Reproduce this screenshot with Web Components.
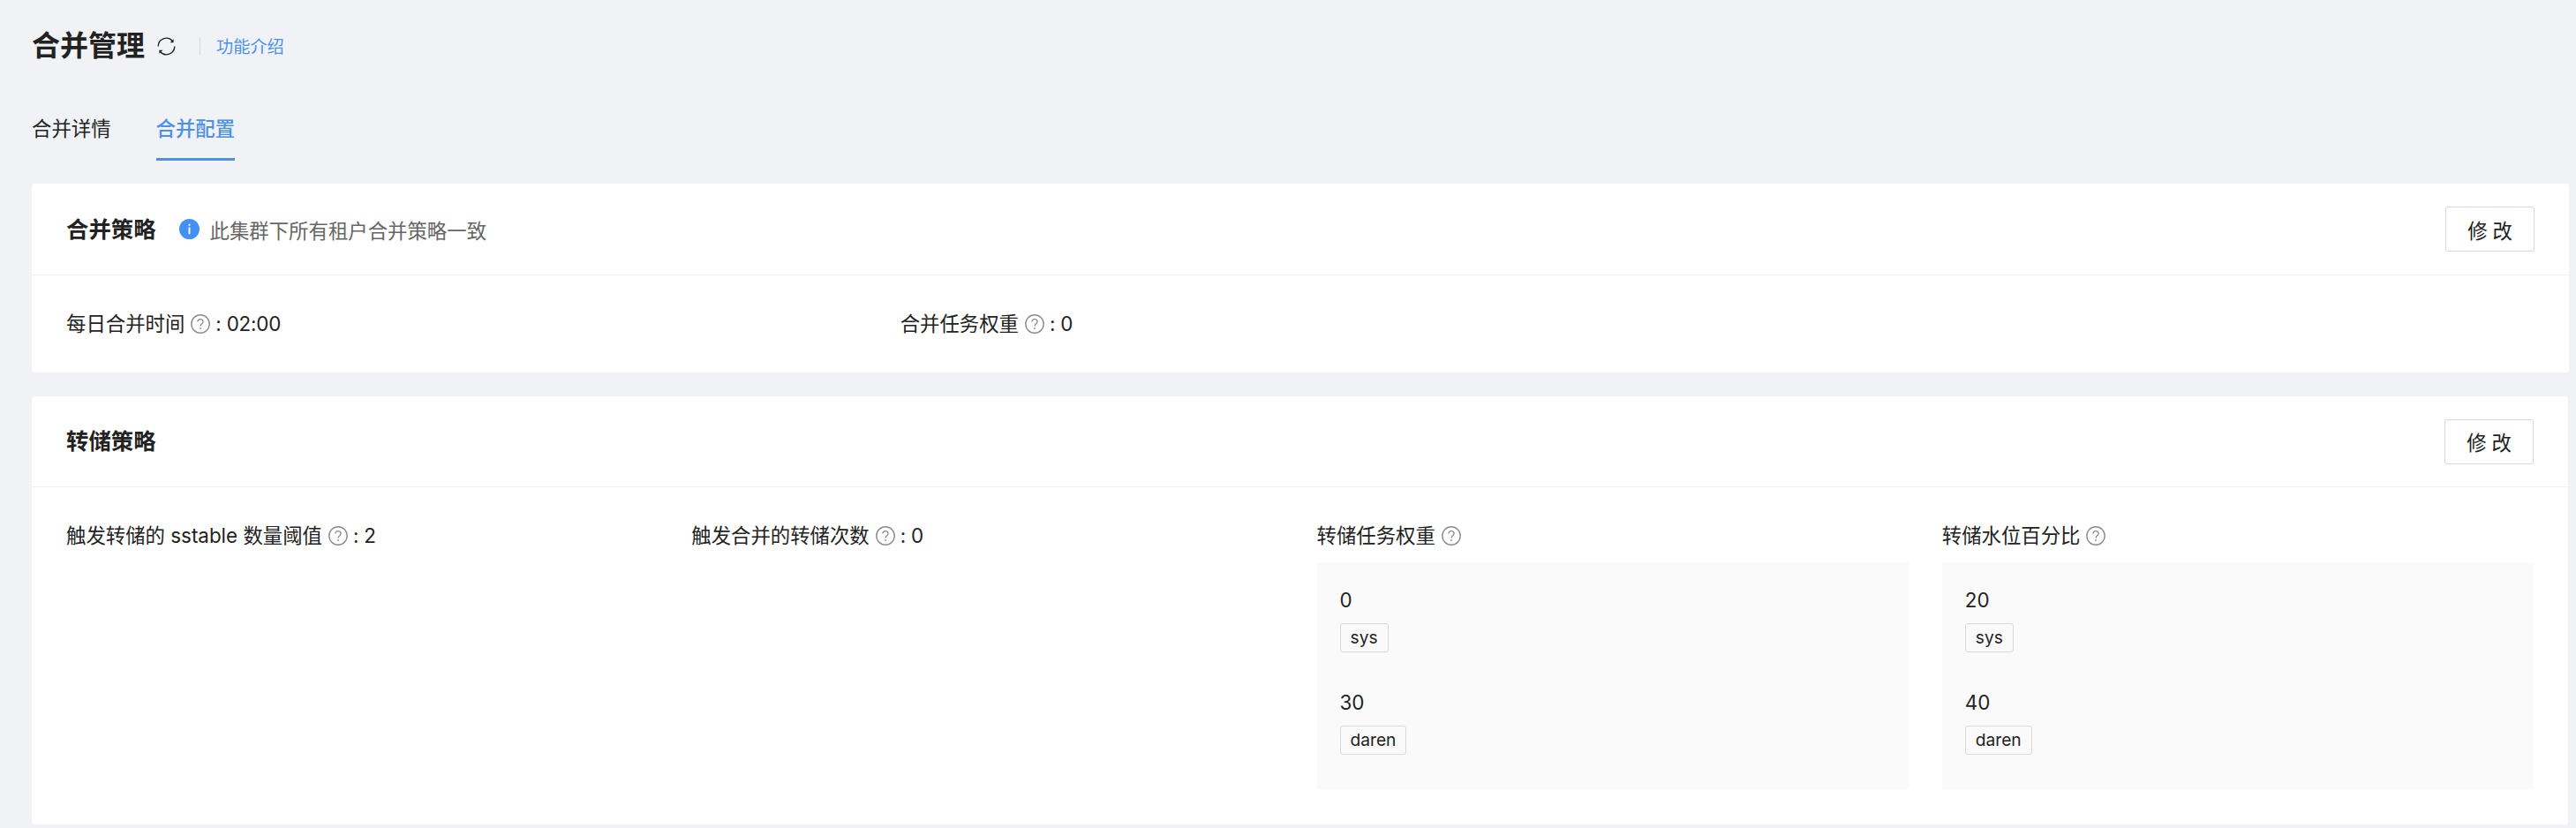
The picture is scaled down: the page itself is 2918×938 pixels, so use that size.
<!DOCTYPE html>
<html lang="zh">
<head>
<meta charset="utf-8">
<title>合并管理</title>
<style>
  html, body { margin: 0; padding: 0; }
  body {
    background: #f0f2f6;
    color: #222;
    font-family: "Inter", "Noto Sans CJK SC", sans-serif;
    font-size: 22.4px;
    min-height: 938px;
    overflow: hidden;
  }
</style>
</head>
<body>
<merge-page>
  <page-header slot="header" heading="合并管理" link="功能介绍"></page-header>
  <tab-bar slot="tabs">
    <tab-item>合并详情</tab-item>
    <tab-item active>合并配置</tab-item>
  </tab-bar>

  <config-card heading="合并策略" note="此集群下所有租户合并策略一致" cols="3" inset="8" head="103">
    <kv-item label="每日合并时间" value="02:00"></kv-item>
    <kv-item label="合并任务权重" value="0"></kv-item>
  </config-card>

  <config-card heading="转储策略" cols="4" inset="9" head="102">
    <kv-item label="触发转储的 sstable 数量阈值" value="2"></kv-item>
    <kv-item label="触发合并的转储次数" value="0"></kv-item>
    <tenant-panel label="转储任务权重">
      <tenant-row value="0" tenant="sys"></tenant-row>
      <tenant-row value="30" tenant="daren"></tenant-row>
    </tenant-panel>
    <tenant-panel label="转储水位百分比">
      <tenant-row value="20" tenant="sys"></tenant-row>
      <tenant-row value="40" tenant="daren"></tenant-row>
    </tenant-panel>
  </config-card>
</merge-page>

<script>
class MergePage extends HTMLElement {
  constructor() {
    super();
    this.shadowDOM = this.attachShadow({ mode: "open" });
  }
  connectedCallback() {
    this.shadowDOM.innerHTML = `
    <style>
      :host { display: block; }
      main { display: flex; flex-direction: column; gap: 27px; padding-top: 25px; }
    </style>
    <slot name="header"></slot>
    <slot name="tabs"></slot>
    <main><slot></slot></main>`;
  }
}

class PageHeader extends HTMLElement {
  constructor() {
    super();
    this.shadowDOM = this.attachShadow({ mode: "open" });
  }
  connectedCallback() {
    this.shadowDOM.innerHTML = `
    <style>
      :host { display: flex; align-items: center; padding: 30px 0 0 36px; height: 44px; }
      h1 { margin: 0; font-size: 32px; line-height: 44px; font-weight: 700; color: #222; }
      svg { width: 21px; height: 21px; margin-left: 14px; }
      i { width: 1px; height: 21px; background: #d6d8dc; margin: 0 18px 0 27px; }
      a { font-size: 19.2px; line-height: 26px; margin-top: 2px; color: #4c90e8; text-decoration: none; }
    </style>
    <h1>${this.getAttribute("heading")}</h1>
    <svg viewBox="0 0 21 21">
      <path d="M1.2 10.5A9.3 9.3 0 0 1 17.4 4.3M19.8 10.5A9.3 9.3 0 0 1 3.6 16.7" fill="none" stroke="#222" stroke-width="1.4"/>
      <path d="M18.6 2.2V6.2H14.6ZM2.4 18.8V14.8H6.4Z" fill="#222"/>
    </svg>
    <i></i>
    <a href="#">${this.getAttribute("link")}</a>`;
  }
}

class TabBar extends HTMLElement {
  constructor() {
    super();
    this.shadowDOM = this.attachShadow({ mode: "open" });
  }
  connectedCallback() {
    this.shadowDOM.innerHTML = `
    <style>
      :host { display: flex; gap: 51px; margin: 35px 0 0 36px; border-bottom: 1px solid #eef0f4; height: 73px; }
    </style>
    <slot></slot>`;
  }
}

class TabItem extends HTMLElement {
  constructor() {
    super();
    this.shadowDOM = this.attachShadow({ mode: "open" });
  }
  connectedCallback() {
    this.shadowDOM.innerHTML = `
    <style>
      :host { display: block; padding: 22px 0 18px; line-height: 30px; height: 30px; border-bottom: 3px solid transparent; }
      :host([active]) { color: #4c90e8; border-bottom-color: #4c90e8; font-weight: 500; }
    </style>
    <slot></slot>`;
  }
}

class ConfigCard extends HTMLElement {
  constructor() {
    super();
    this.shadowDOM = this.attachShadow({ mode: "open" });
  }
  connectedCallback() {
    const note = this.getAttribute("note");
    const noteHtml = note ? `
      <svg viewBox="0 0 24 24"><circle cx="12" cy="12" r="12" fill="#4390f7"/><rect x="11" y="10" width="2" height="8" fill="#fff"/><rect x="11" y="6" width="2" height="2" fill="#fff"/></svg>
      <span>${note}</span>` : "";
    this.shadowDOM.innerHTML = `
    <style>
      :host {
        display: block;
        background: #fff;
        border-radius: 3px;
        margin: 0 ${this.getAttribute("inset")}px 0 36px;
      }
      header {
        display: flex;
        align-items: center;
        height: ${this.getAttribute("head")}px;
        padding: 0 39px;
        border-bottom: 1px solid #eff0f3;
      }
      h2 { margin: 0; font-size: 25.4px; line-height: 36px; font-weight: 600; color: #222; }
      svg { width: 23px; height: 23px; margin-left: 26px; }
      span { margin-left: 12px; color: #666; }
      button {
        margin-left: auto;
        width: 101px;
        height: 51px;
        padding: 0;
        background: #fff;
        border: 1px solid #d9d9d9;
        border-radius: 3px;
        color: #222;
        font: inherit;
        letter-spacing: 0.26em;
        text-indent: 0.26em;
      }
      .body {
        display: grid;
        grid-template-columns: repeat(${this.getAttribute("cols")}, 1fr);
        column-gap: 38px;
        padding: 40px 39px;
      }
    </style>
    <header>
      <h2>${this.getAttribute("heading")}</h2>${noteHtml}
      <button>修改</button>
    </header>
    <div class="body"><slot></slot></div>`;
  }
}

const HELP_ICON = `<svg viewBox="0 0 22 22">
  <circle cx="11" cy="11" r="10.2" fill="none" stroke="#8c8c8c" stroke-width="1.4"/>
  <path d="M7.8 8.6C7.8 6.8 9.2 5.6 11 5.6S14.2 6.8 14.2 8.5C14.2 10.6 11 10.8 11 13.4" fill="none" stroke="#8c8c8c" stroke-width="1.3"/>
  <circle cx="11" cy="16" r="0.9" fill="#8c8c8c"/>
</svg>`;

class KvItem extends HTMLElement {
  constructor() {
    super();
    this.shadowDOM = this.attachShadow({ mode: "open" });
  }
  connectedCallback() {
    this.shadowDOM.innerHTML = `
    <style>
      :host { display: flex; align-items: center; line-height: 30px; height: 30px; white-space: pre; }
      svg { width: 22px; height: 22px; margin: 0 6px 0 7px; flex: none; }
      .value { letter-spacing: -0.2px; }
    </style>
    <span>${this.getAttribute("label")}</span>${HELP_ICON}<span class="value">: ${this.getAttribute("value")}</span>`;
  }
}

class TenantPanel extends HTMLElement {
  constructor() {
    super();
    this.shadowDOM = this.attachShadow({ mode: "open" });
  }
  connectedCallback() {
    this.shadowDOM.innerHTML = `
    <style>
      :host { display: block; }
      .label { display: flex; align-items: center; line-height: 30px; height: 30px; margin-bottom: 15px; }
      svg { width: 22px; height: 22px; margin-left: 7px; }
      .box { display: flex; flex-direction: column; gap: 42px; background: #fafafa; padding: 28px 26px 39px; }
    </style>
    <div class="label"><span>${this.getAttribute("label")}</span>${HELP_ICON}</div>
    <div class="box"><slot></slot></div>`;
  }
}

class TenantRow extends HTMLElement {
  constructor() {
    super();
    this.shadowDOM = this.attachShadow({ mode: "open" });
  }
  connectedCallback() {
    this.shadowDOM.innerHTML = `
    <style>
      :host { display: block; }
      div { line-height: 30px; margin-bottom: 11px; }
      span {
        display: inline-block;
        box-sizing: border-box;
        height: 33px;
        padding: 0 11px;
        line-height: 31px;
        font-size: 19.2px;
        background: #fafafa;
        border: 1px solid #d9d9d9;
        border-radius: 3px;
        vertical-align: top;
      }
      p { margin: 0; height: 33px; }
    </style>
    <div>${this.getAttribute("value")}</div>
    <p><span>${this.getAttribute("tenant")}</span></p>`;
  }
}

customElements.define("merge-page", MergePage);
customElements.define("page-header", PageHeader);
customElements.define("tab-bar", TabBar);
customElements.define("tab-item", TabItem);
customElements.define("config-card", ConfigCard);
customElements.define("kv-item", KvItem);
customElements.define("tenant-panel", TenantPanel);
customElements.define("tenant-row", TenantRow);
</script>
</body>
</html>
